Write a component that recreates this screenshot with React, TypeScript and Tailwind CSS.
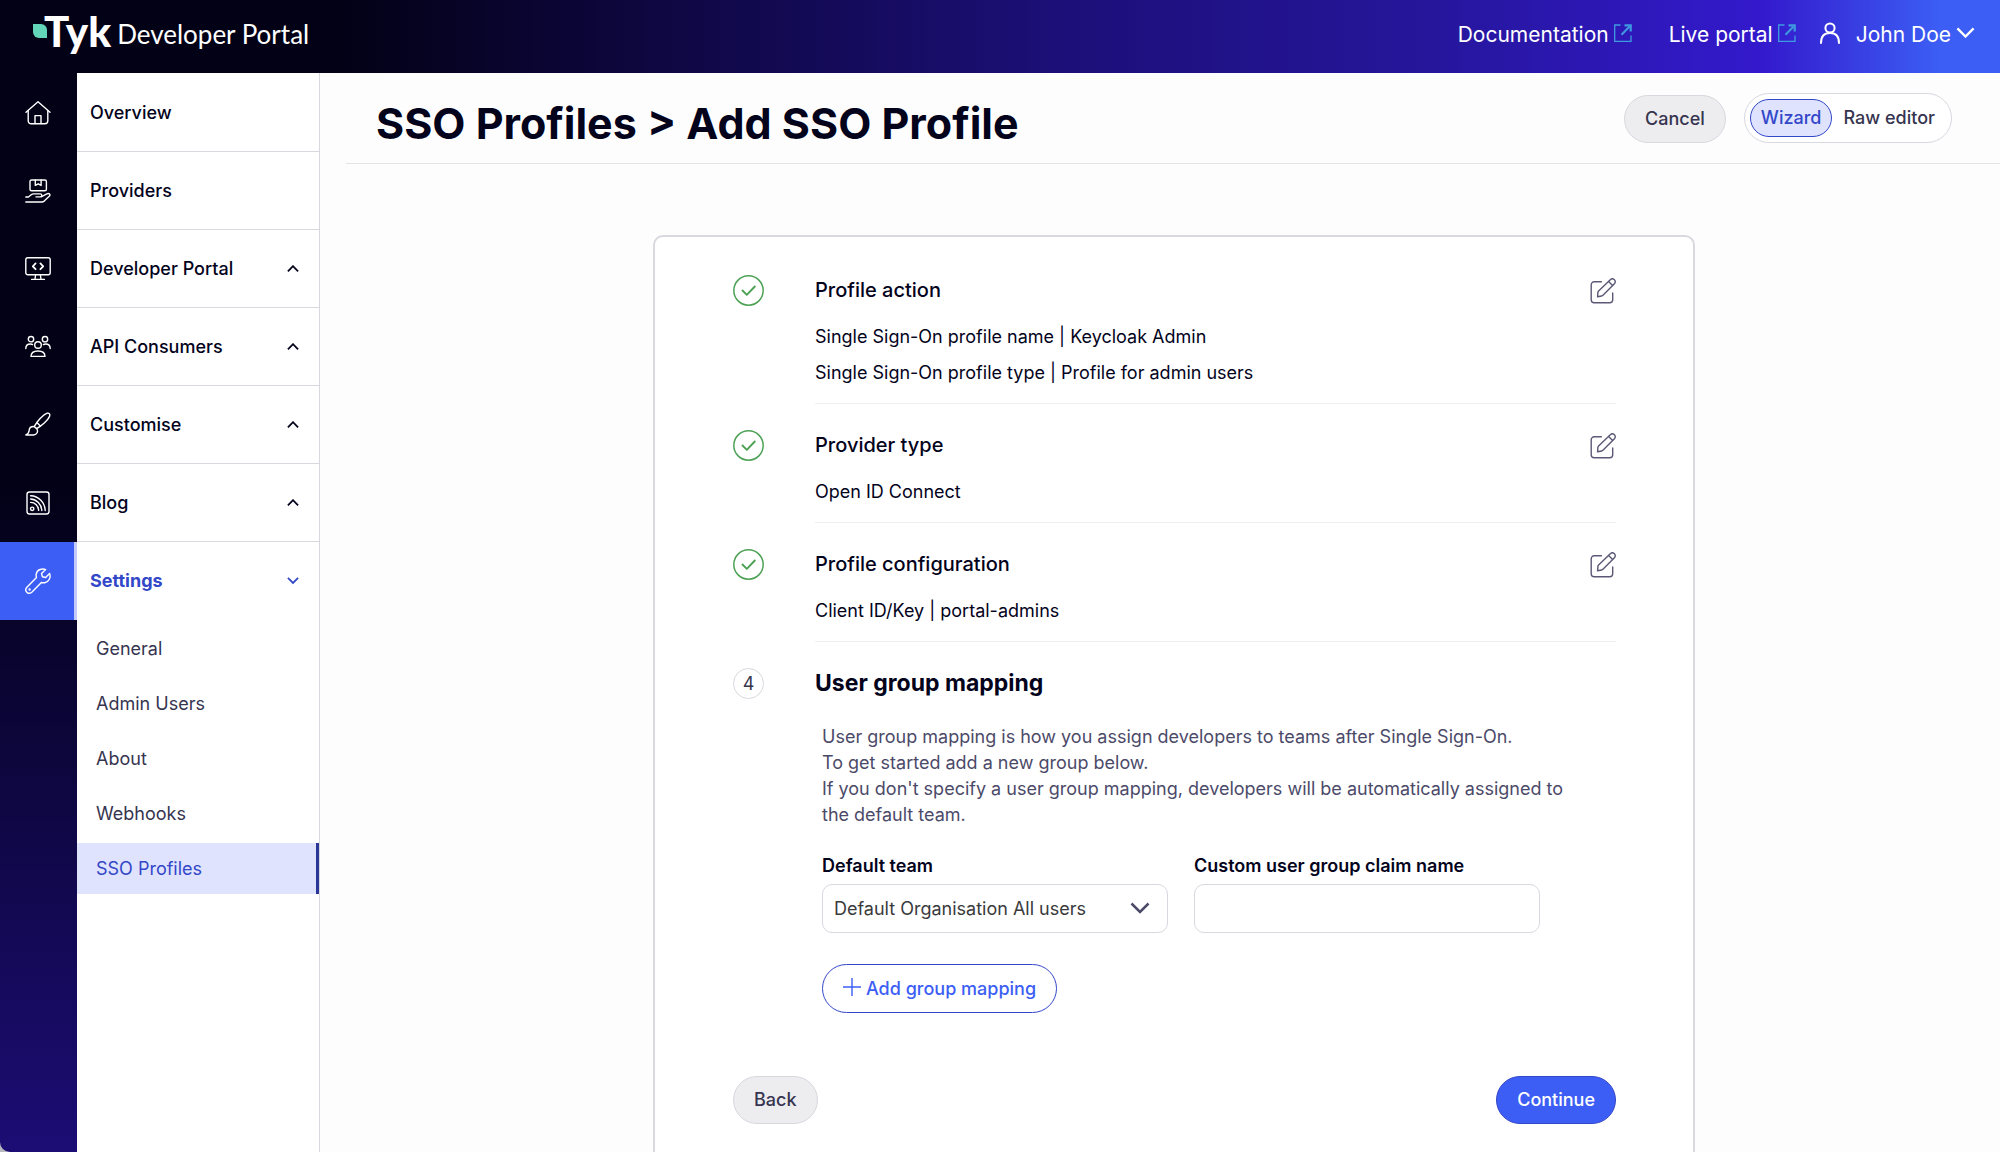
import { useState } from 'react'
import type { ReactNode } from 'react'

interface IconProps {
  className?: string
  children: ReactNode
}

function RailIcon({ className = 'size-[26px]', children }: IconProps) {
  return (
    <svg
      viewBox="0 0 26 26"
      fill="none"
      stroke="currentColor"
      strokeWidth="1.4"
      strokeLinecap="round"
      strokeLinejoin="round"
      aria-hidden="true"
      className={className}
    >
      {children}
    </svg>
  )
}

const icons = {
  home: (
    <RailIcon>
      <path d="M1 12.2 13 1.8l12 10.4" />
      <path d="M3.2 10.6v10.2a3 3 0 0 0 3 3h13.6a3 3 0 0 0 3-3V10.6" />
      <path d="M10 23.6v-8h6v8" />
    </RailIcon>
  ),
  providers: (
    <RailIcon>
      <rect x="5" y="2" width="16.4" height="10.8" rx="1.6" />
      <path d="M10.3 2v5.4l2.9-1.6 2.9 1.6V2" />
      <path d="M.8 19h2.6l2.8-2.3c.7-.6 1.5-.8 2.4-.8h6.6c2.2 0 2.2 3 0 3H11" />
      <path d="M16.6 18.6l5.3-2.8c2.2-1 4 .9 2.3 2.5l-5 4.8c-.7.6-1.4.9-2.3.9H.8" />
    </RailIcon>
  ),
  portal: (
    <RailIcon>
      <rect x=".8" y="1.8" width="24.4" height="17" rx="2" />
      <path d="M10.6 7.4 7.8 10.3l2.8 2.9M15.4 7.4l2.8 2.9-2.8 2.9" strokeWidth="1.8" />
      <path d="M10.6 19l-.6 4M15.4 19l.6 4M6.6 23.4h12.8" />
    </RailIcon>
  ),
  consumers: (
    <RailIcon>
      <circle cx="6" cy="5.2" r="2.7" />
      <circle cx="20" cy="5.2" r="2.7" />
      <circle cx="13" cy="11" r="3.3" />
      <path d="M.8 14.6c0-3 2-4.6 4.6-4.6 1 0 1.7.2 2.2.6M25.2 14.6c0-3-2-4.6-4.6-4.6-1 0-1.7.2-2.2.6" />
      <path d="M6 22.4c0-3.4 2.8-5.4 7-5.4s7 2 7 5.4z" />
    </RailIcon>
  ),
  brush: (
    <RailIcon>
      <path d="M9.2 14.6C12 9.6 18 2.6 21.8 1.3c2.4-.6 3.5.6 2.9 2.8-1.4 3.9-8 9.6-13 12.5" />
      <path d="M12.4 11l3 3" />
      <path d="M9.2 14.6c-2.6-.2-4.8 1.2-5 3.6-.2 2-.6 3.6-3.3 4.8h7.7c3.4-.6 5-3.4 3.1-6.4z" />
    </RailIcon>
  ),
  blog: (
    <RailIcon>
      <rect x="2" y="2" width="22" height="22" rx="2.4" />
      <circle cx="7.2" cy="18.8" r="1.7" />
      <path d="M5.6 12.4c4.4 0 8 3.4 8 8M5.6 9c6 .2 11 5.2 11.2 11.6M5.6 5.8c8 .2 14.4 6.8 14.6 14.8" />
    </RailIcon>
  ),
  wrench: (
    <RailIcon>
      <path d="M20.7 1.6c-3.2-1.5-8.8-.2-9.5 4.5-.2 1.6 0 2.6.3 3.5L1.9 19.2c-3.2 3.6 1.4 8 4.9 5l9.6-9.7c1 .4 2 .4 3.4.2 4.2-.6 6.3-5.4 4.8-9.2l-4 4-3.2-.8-.9-3.3z" />
      <circle cx="4.6" cy="21.5" r=".5" />
    </RailIcon>
  ),
}

interface NavItem {
  label: string
  icon: ReactNode
  expandable: boolean
}

const navItems: NavItem[] = [
  { label: 'Overview', icon: icons.home, expandable: false },
  { label: 'Providers', icon: icons.providers, expandable: false },
  { label: 'Developer Portal', icon: icons.portal, expandable: true },
  { label: 'API Consumers', icon: icons.consumers, expandable: true },
  { label: 'Customise', icon: icons.brush, expandable: true },
  { label: 'Blog', icon: icons.blog, expandable: true },
]

const settingsItems = ['General', 'Admin Users', 'About', 'Webhooks', 'SSO Profiles']

const completedSteps = [
  {
    title: 'Profile action',
    lines: [
      'Single Sign-On profile name | Keycloak Admin',
      'Single Sign-On profile type | Profile for admin users',
    ],
  },
  { title: 'Provider type', lines: ['Open ID Connect'] },
  { title: 'Profile configuration', lines: ['Client ID/Key | portal-admins'] },
]

function Chevron({ up = false, className }: { up?: boolean; className: string }) {
  return (
    <svg viewBox="0 0 20 12" fill="none" stroke="currentColor" aria-hidden="true" className={className}>
      <path d={up ? 'M1.5 10.5 10 2l8.5 8.5' : 'M1.5 1.5 10 10l8.5-8.5'} />
    </svg>
  )
}

function ExternalIcon() {
  return (
    <svg viewBox="0 0 18 18" fill="none" stroke="#3f9be0" className="mb-1 size-[18px]" aria-hidden="true">
      <path d="M6.5 1H.7v16.3h16.3v-5.8" strokeWidth="1.3" />
      <path d="M7.5 10.8 15.5 2.5" strokeWidth="2" />
      <path d="M10.5 1.3h6.2v6.2" strokeWidth="2.2" />
    </svg>
  )
}

function EditIcon() {
  return (
    <svg
      viewBox="0 0 26 26"
      fill="none"
      stroke="currentColor"
      strokeWidth="1.4"
      strokeLinecap="round"
      strokeLinejoin="round"
      className="size-[26px]"
      aria-hidden="true"
    >
      <path d="M11.4 3.8H4.2a3 3 0 0 0-3 3v15a3 3 0 0 0 3 3h15.5a3 3 0 0 0 3-3v-6.9" />
      <path d="M7.6 18.8l.3-4.4c.1-.6.3-1 .7-1.4L20.3 1.7c1.2-1.2 3-1.1 4.1 0 1.2 1.2 1.2 2.9 0 4.1L13.2 17.1c-.5.5-.9.8-1.6.9z" />
      <path d="M18.6 3.5l4 4" />
    </svg>
  )
}

function Logo() {
  return (
    <a href="#" className="flex items-center pb-1 font-[Lato,sans-serif] text-white">
      <svg viewBox="0 0 14 14" className="-mr-[3px] mb-2 size-[14px]" aria-hidden="true">
        <path d="M0 0h8a6 6 0 0 1 6 6v8H6a6 6 0 0 1-6-6z" fill="#63d6b9" />
      </svg>
      <span className="pb-2 text-[42px] leading-[52px] font-black">Tyk</span>
      <span className="ml-1.5 text-[26px] font-normal">Developer Portal</span>
    </a>
  )
}

function Header() {
  return (
    <header className="flex h-[73px] shrink-0 items-center justify-between bg-[linear-gradient(90deg,#030116_0%,#030116_17%,#1c0f78_53%,#25169a_71%,#3319cc_88%,#3c5ef5_97%)] pr-[25px] pl-[33px]">
      <Logo />
      <nav className="flex items-center pb-1 text-[21px] text-white">
        <a href="#" className="flex items-center gap-[5px]">
          Documentation
          <ExternalIcon />
        </a>
        <a href="#" className="ml-[37px] flex items-center gap-[5px]">
          Live portal
          <ExternalIcon />
        </a>
        <button type="button" className="ml-6 flex items-center">
          <svg
            viewBox="0 0 20 22"
            fill="none"
            stroke="currentColor"
            strokeWidth="2"
            strokeLinecap="round"
            className="mr-4 mb-1 h-[22px] w-5"
            aria-hidden="true"
          >
            <circle cx="10" cy="6" r="4.6" />
            <path d="M1 21c0-6.5 3.5-10 9-10s9 3.5 9 10" />
          </svg>
          John Doe
          <Chevron className="mb-1 ml-[5px] w-[19px] stroke-[2.5]" />
        </button>
      </nav>
    </header>
  )
}

function Sidebar() {
  return (
    <aside className="flex shrink-0">
      <div className="w-[77px] rounded-bl-[10px] bg-[linear-gradient(180deg,#030116_0%,#030116_38%,#1b0d74_100%)] pt-px text-white">
        {navItems.map((item) => (
          <a
            key={item.label}
            href="#"
            aria-label={item.label}
            className="flex h-[78px] items-center justify-center pr-px pb-px"
          >
            {item.icon}
          </a>
        ))}
        <a
          href="#"
          aria-label="Settings"
          className="flex h-[78px] items-center justify-center border-r-3 border-[#c3cbfb] bg-[#3c5ef5] pl-0.5"
        >
          {icons.wrench}
        </a>
      </div>

      <nav className="w-[243px] border-r border-[#d8d8df] bg-white pt-px text-lg text-[#03031c]">
        {navItems.map((item) => (
          <a
            key={item.label}
            href="#"
            className="flex h-[78px] items-center justify-between border-b border-[#d8d8df] pr-5 pl-[13px] font-medium"
          >
            {item.label}
            {item.expandable && <Chevron up className="w-3 stroke-[3]" />}
          </a>
        ))}
        <a href="#" className="flex h-[78px] items-center justify-between pr-5 pl-[13px] font-bold text-[#3347c9]">
          Settings
          <Chevron className="w-3 stroke-[3]" />
        </a>
        <ul className="mt-[3px] flex flex-col gap-1">
          {settingsItems.map((label) => (
            <li key={label}>
              <a
                href="#"
                className={
                  label === 'SSO Profiles'
                    ? 'flex h-[51px] items-center border-r-3 border-[#2b3796] bg-[#dfe3fd] pl-[19px] text-[#3347c9]'
                    : 'flex h-[51px] items-center pl-[19px] text-[#36344f]'
                }
              >
                {label}
              </a>
            </li>
          ))}
        </ul>
      </nav>
    </aside>
  )
}

function CompletedStep({ title, lines }: { title: string; lines: string[] }) {
  return (
    <li className="flex gap-[51px]">
      <svg viewBox="0 0 31 31" fill="none" stroke="#4ca154" className="size-[31px] shrink-0" aria-hidden="true">
        <circle cx="15.5" cy="15.5" r="14.7" strokeWidth="1.5" />
        <path d="M9.5 15.5l4.3 4.3 8-8.3" strokeWidth="1.9" strokeLinecap="round" strokeLinejoin="round" />
      </svg>
      <div className="mb-[26px] flex-1 border-b border-[#efeff2] pb-3">
        <div className="mb-3 flex h-8 items-center justify-between">
          <h2 className="text-[20px] font-medium">{title}</h2>
          <button type="button" aria-label={`Edit ${title}`} className="text-[#5b5876]">
            <EditIcon />
          </button>
        </div>
        {lines.map((line) => (
          <p key={line} className="leading-9">
            {line}
          </p>
        ))}
      </div>
    </li>
  )
}

function GroupMappingStep() {
  const [claimName, setClaimName] = useState('')

  return (
    <li className="flex gap-[51px]">
      <span className="flex size-[31px] shrink-0 items-center justify-center rounded-full border border-[#d8d8df] text-[#36344f]">
        4
      </span>
      <div className="flex-1">
        <h2 className="text-[23px] leading-[30px] font-bold">User group mapping</h2>
        <div className="mt-[26px] pr-[44px] pl-[7px]">
          <p className="leading-[26px] text-[#4c4a69]">
            User group mapping is how you assign developers to teams after Single Sign-On.
            <br />
            To get started add a new group below.
            <br />
            If you don't specify a user group mapping, developers will be automatically assigned to the default team.
          </p>
          <div className="mt-[25px] grid grid-cols-2 gap-[26px] pr-8">
            <div>
              <label htmlFor="default-team" className="block leading-[26px] font-semibold">
                Default team
              </label>
              <div className="relative mt-[5px]">
                <select
                  id="default-team"
                  className="h-[49px] w-full appearance-none rounded-[10px] border border-[#d8d8df] bg-white pr-12 pl-[11px] text-[#3a3a3c]"
                >
                  <option>Default Organisation All users</option>
                </select>
                <Chevron className="pointer-events-none absolute top-[18px] right-[18px] w-5 stroke-[#4c4a69] stroke-[2.5]" />
              </div>
            </div>
            <div>
              <label htmlFor="claim-name" className="block leading-[26px] font-semibold">
                Custom user group claim name
              </label>
              <input
                id="claim-name"
                type="text"
                value={claimName}
                onChange={(e) => setClaimName(e.target.value)}
                className="mt-[5px] block h-[49px] w-full rounded-[10px] border border-[#d8d8df] bg-white px-[11px]"
              />
            </div>
          </div>
          <button
            type="button"
            className="mt-[31px] flex h-[49px] items-center gap-[5px] rounded-full border border-[#3347c9] px-5 font-medium text-[#3c5ef5]"
          >
            <svg viewBox="0 0 18 18" stroke="currentColor" strokeWidth="1.4" className="mb-1 size-[18px]" aria-hidden="true">
              <path d="M9 0v18M0 9h18" />
            </svg>
            Add group mapping
          </button>
        </div>
      </div>
    </li>
  )
}

export default function App() {
  const [mode, setMode] = useState<'wizard' | 'raw'>('wizard')

  const active = 'h-[38px] rounded-full border border-[#3347c9] bg-[#dfe3fd] px-2.5 text-[#3347c9]'
  const inactive = 'h-[38px] rounded-full border border-transparent px-2.5 text-[#36344f]'

  return (
    <div className="flex h-screen flex-col overflow-hidden bg-[#b9b9c0] font-[Inter,sans-serif] text-[#03031c]">
      <Header />
      <div className="flex min-h-0 flex-1">
        <Sidebar />
        <main className="min-w-0 flex-1 overflow-hidden bg-[#fdfdfd] text-lg">
          <div className="ml-[26px] flex h-[91px] items-center justify-between border-b border-[#e3e3e8] pr-12 pl-[30px]">
            <h1 className="pt-2.5 text-[43px] leading-[52px] font-bold">SSO Profiles &gt; Add SSO Profile</h1>
            <div className="flex items-center gap-[18px] font-medium">
              <button
                type="button"
                className="mt-0.5 h-12 rounded-full border border-[#d8d8df] bg-[#ededf0] px-5 text-[#36344f]"
              >
                Cancel
              </button>
              <div className="flex h-[50px] items-center rounded-full border border-[#d8d8df] bg-white px-[5px]">
                <button type="button" className={mode === 'wizard' ? active : inactive} onClick={() => setMode('wizard')}>
                  Wizard
                </button>
                <button type="button" className={mode === 'raw' ? active : inactive} onClick={() => setMode('raw')}>
                  Raw editor
                </button>
              </div>
            </div>
          </div>

          <div className="pt-[71px] pl-7">
            <section className="mx-auto max-w-[1042px] rounded-[10px] border-2 border-[#d8d8df] bg-white pt-[38px] pr-[77px] pb-16 pl-[78px]">
              <ol>
                {completedSteps.map((step) => (
                  <CompletedStep key={step.title} {...step} />
                ))}
                <GroupMappingStep />
              </ol>
              <div className="mt-[63px] flex justify-between font-medium">
                <button
                  type="button"
                  className="h-12 rounded-full border border-[#d8d8df] bg-[#ededf0] px-5 text-[#36344f]"
                >
                  Back
                </button>
                <button
                  type="button"
                  className="h-12 rounded-full border border-[#3347c9] bg-[#3c5ef5] px-5 text-white"
                >
                  Continue
                </button>
              </div>
            </section>
          </div>
        </main>
      </div>
    </div>
  )
}
